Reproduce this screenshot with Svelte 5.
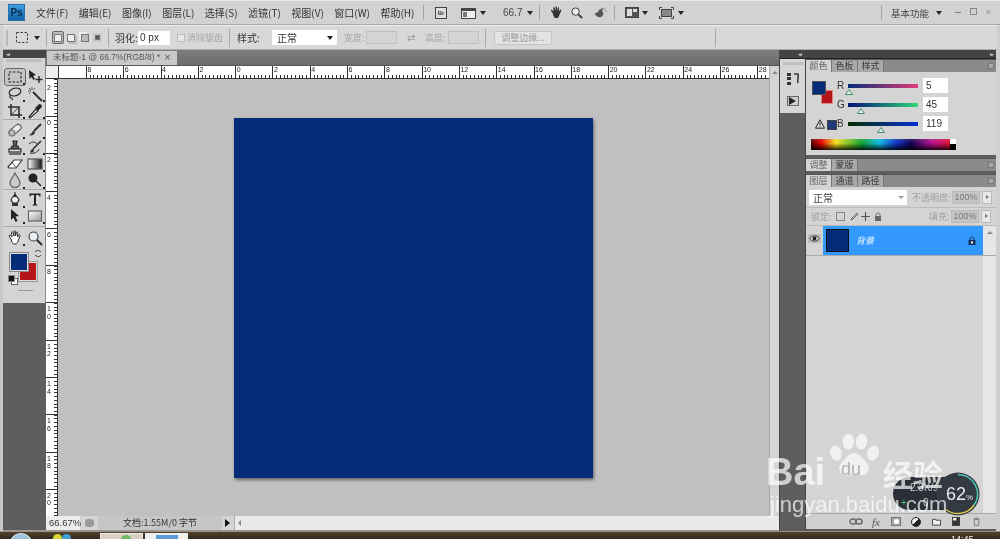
<script>
	const menus = ['文件(F)', '编辑(E)', '图像(I)', '图层(L)', '选择(S)', '滤镜(T)', '视图(V)', '窗口(W)', '帮助(H)'];
	const hLabels = ['8', '6', '4', '2', '0', '2', '4', '6', '8', '10', '12', '14', '16', '18', '20', '22', '24', '26', '28'];
	const vLabels = ['0', '2', '4', '6', '8', '10', '12', '14', '16', '18', '20'];

	const toolGroups = [
		['marquee', 'move', 'lasso', 'wand', 'crop', 'dropper'],
		['heal', 'brush', 'stamp', 'history', 'eraser', 'gradient', 'dodge', 'burn'],
		['pen', 'type', 'select', 'shape'],
		['hand', 'zoom']
	];

	const sliders = [
		{ name: 'R', value: 5, pos: -3, track: 'linear-gradient(90deg, #052d77, #e03a78)' },
		{ name: 'G', value: 45, pos: 9, track: 'linear-gradient(90deg, #051077, #2fd87a)' },
		{ name: 'B', value: 119, pos: 29, track: 'linear-gradient(90deg, #052d00, #0530d8)' }
	];
</script>

{#snippet toolIcon(name)}
	<svg viewBox="0 0 16 16" width="16" height="16" fill="none" stroke="#2a2a2a" stroke-width="1.2">
		{#if name === 'marquee'}
			<rect x="2" y="3" width="12" height="10" stroke-dasharray="2.5 1.5" />
		{:else if name === 'move'}
			<path d="M2 1l7 5-3 1 2 3-1.5 1-2-3-2 2z" fill="#222" stroke="none" />
			<path d="M12 7v7M8.5 10.500h7" stroke-width="1.400" />
		{:else if name === 'lasso'}
			<ellipse cx="8" cy="6" rx="6" ry="3.800" transform="rotate(-15 8 6)" />
			<path d="M4 9c-2 1-1 3 0 3s2 1 1 2" />
		{:else if name === 'wand'}
			<path d="M6 6l9 9" stroke-width="1.800" />
			<path d="M5 1v3M1 5h3M2 2l2 2M8 2L6.500 3.500M2 8l1.500-1.500" stroke-width="1" stroke="#555" />
		{:else if name === 'crop'}
			<path d="M4 1v11h11M1 4h11v11" stroke-width="1.500" />
			<path d="M4 12L12 4" stroke-width="0.800" />
		{:else if name === 'dropper'}
			<path d="M3 15l-1-1 7-8 2 2z" fill="#fff" />
			<path d="M9 5l3-3c1-1 3 1 2 2l-3 3z" fill="#222" />
		{:else if name === 'heal'}
			<rect x="1" y="5" width="14" height="6" rx="3" transform="rotate(-40 8 8)" fill="#eee" stroke="#666" />
			<circle cx="5" cy="11" r="3" fill="#bbb" stroke="#777" />
		{:else if name === 'brush'}
			<path d="M14 2L7 9" stroke-width="1.800" />
			<path d="M7 9c-2 0-2 2-3 3l-2 1c2 1 6 0 6-3z" fill="#333" stroke="none" />
		{:else if name === 'stamp'}
			<path d="M6 2h4l-1 5h2l1 3H4l1-3h2z" fill="#666" stroke="#222" />
			<rect x="2" y="10" width="12" height="3" fill="#ddd" />
			<path d="M2 15h12" />
		{:else if name === 'history'}
			<path d="M14 2L6 10" stroke-width="1.600" />
			<path d="M2 5c3-3 7-2 8 0M3 14c4 1 8-1 9-4" stroke-width="1" />
			<path d="M6 10c-2 0-2 2-3 3 2 1 4 0 4-2z" fill="#333" stroke="none" />
		{:else if name === 'eraser'}
			<path d="M1 11l6-7h8l-6 8H2z" fill="#fff" stroke="#444" />
			<path d="M5 6.500l4 5" stroke-width="0.800" />
		{:else if name === 'gradient'}
			<defs><linearGradient id="tg"><stop offset="0" stop-color="#fff" /><stop offset="1" stop-color="#111" /></linearGradient></defs>
			<rect x="1" y="3" width="14" height="10" fill="url(#tg)" stroke="#555" />
		{:else if name === 'dodge'}
			<path d="M8 1c1 3 5 6 5 10a5 4.500 0 0 1-10 0c0-4 4-7 5-10z" fill="#ccc" stroke="#666" />
		{:else if name === 'burn'}
			<circle cx="6" cy="6" r="4.500" fill="#222" stroke="none" />
			<path d="M8 8l6 6" stroke-width="1.600" />
		{:else if name === 'pen'}
			<path d="M8 1v5M4 9c0-2 3-3 4-6 1 3 4 4 4 6l-2 3H6z" fill="#eee" />
			<rect x="5" y="12" width="6" height="3" fill="#333" stroke="none" />
		{:else if name === 'type'}
			<path d="M2.500 2.500h11v3h-1c0-1-1-1.500-2-1.500H9v9l1.500 1v.5h-5V14L7 13V4H5.500c-1 0-2 .5-2 1.500h-1z" fill="#222" stroke="none" />
		{:else if name === 'select'}
			<path d="M4 1l8 7-3.500.5 2 4.500-2 1-2-4.500L4 12z" fill="#222" stroke="none" />
		{:else if name === 'shape'}
			<defs><linearGradient id="ts" x1="0" y1="0" x2="1" y2="1"><stop offset="0" stop-color="#fff" /><stop offset="1" stop-color="#999" /></linearGradient></defs>
			<rect x="1.500" y="3" width="13" height="10" fill="url(#ts)" stroke="#666" />
		{:else if name === 'hand'}
			<path d="M4 9L2 6c0-1 1-1 1.500-.5L5 7 4.500 2.500c0-1 1.500-1 1.500 0L7 6V1.500c0-1 1.500-1 1.500 0V6l1-3.500c.3-1 1.500-.7 1.300.3L10.500 7l1.500-2c.7-.7 1.500 0 1 1l-2 5c-.5 2-1 3-3 3H7c-1.500 0-2-2-3-5z" fill="#fff" stroke="#333" stroke-width="1" />
		{:else if name === 'zoom'}
			<circle cx="6.500" cy="6.500" r="4.500" fill="#e8eef2" stroke="#444" />
			<path d="M10 10l5 5" stroke-width="2" />
		{/if}
	</svg>
{/snippet}

<div class="app">
	<header class="titlebar">
		<div class="ps-logo">Ps</div>
		<nav class="menus">
			{#each menus as m}
				<span>{m}</span>
			{/each}
		</nav>
		<i class="sep first"></i>
		<div class="br">Br</div>
		<svg class="layout-ic" viewBox="0 0 17 12" width="17" height="12">
			<rect x="0.500" y="1.500" width="14" height="10" fill="#eee" stroke="#444" />
			<rect x="1" y="2" width="13" height="2" fill="#444" />
			<rect x="2" y="5" width="4" height="5" fill="#777" />
		</svg>
		<i class="arrow a1"></i>
		<span class="zoom-val">66.7</span>
		<i class="arrow a2"></i>
		<i class="sep s2"></i>
		<svg class="bar-ic hand-ic" viewBox="0 0 14 14" width="13" height="13">
			<path d="M3 8L1 5c0-1 1-1 1.500-.5L4 6 3.500 2c0-1 1.500-1 1.500 0L6 5V1c0-1 1.500-1 1.500 0V5l1-3c.3-1 1.500-.7 1.300.3L9.500 6l1.500-2c.7-.7 1.500 0 1 1l-2 5c-.5 2-1 3-2.500 3H6c-1.500 0-2-2-3-5z" fill="#333" />
		</svg>
		<svg class="bar-ic zoom-ic" viewBox="0 0 13 13" width="12" height="12" fill="none" stroke="#333">
			<circle cx="5" cy="5" r="4" fill="#eee" />
			<path d="M8 8l4 4" stroke-width="1.800" />
		</svg>
		<svg class="bar-ic rot-ic" viewBox="0 0 14 14" width="14" height="14">
			<path d="M2 9c-1-1 0-2 1-2l2-1 1-2 2-1 1-1 1 1-1 2 1 1c1 2 0 4-2 5-2 1-5-1-6-3z" fill="#555" />
			<path d="M10 2c2 1 3 2 3 4" fill="none" stroke="#888" />
		</svg>
		<i class="sep s3"></i>
		<svg class="bar-ic arr-ic" viewBox="0 0 14 11" width="14" height="11">
			<rect x="0.500" y="0.500" width="13" height="10" fill="#555" stroke="#444" />
			<rect x="2" y="2" width="5" height="7" fill="#ddd" />
			<rect x="8" y="2" width="4" height="3" fill="#ddd" />
		</svg>
		<i class="arrow a3"></i>
		<svg class="bar-ic scr-ic" viewBox="0 0 15 12" width="15" height="12" fill="none" stroke="#444">
			<rect x="2.500" y="2.500" width="10" height="7" fill="#888" />
			<path d="M0.500 3V.5H3M12 .5h2.500V3M.5 9v2.500H3M12 11.500h2.500V9" />
		</svg>
		<i class="arrow a4"></i>
		<i class="sep s4"></i>
		<span class="workspace">基本功能</span>
		<i class="arrow a5"></i>
		<div class="win-btns">
			<i class="min"></i>
			<i class="rest"></i>
			<span class="close">✕</span>
		</div>
	</header>

	<div class="options">
		<i class="grip"></i>
		<svg class="opt-marquee" viewBox="0 0 13 12" width="13" height="12" fill="none" stroke="#444">
			<rect x="0.500" y="0.500" width="11" height="10" stroke-dasharray="2.500 1.500" />
		</svg>
		<i class="arrow o1"></i>
		<i class="osep o2"></i>
		<div class="modes">
			<span class="mode active"><b></b></span>
			<span class="mode"><b class="two"></b></span>
			<span class="mode"><b class="three"></b></span>
			<span class="mode"><b class="four"></b></span>
		</div>
		<i class="osep o3"></i>
		<span class="opt-label feather">羽化:</span>
		<span class="opt-input">0 px</span>
		<i class="check"></i>
		<span class="opt-label dim aa">消除锯齿</span>
		<i class="osep o4"></i>
		<span class="opt-label style-l">样式:</span>
		<span class="opt-select">正常<i class="arrow"></i></span>
		<span class="opt-label dim wl">宽度:</span>
		<i class="dis-input"></i>
		<span class="swap">⇄</span>
		<span class="opt-label dim hl">高度:</span>
		<i class="dis-input"></i>
		<i class="osep o5"></i>
		<span class="refine">调整边缘...</span>
		<i class="osep o6"></i>
	</div>

	<div class="main">
		<aside class="tools-col">
			<div class="tools-head"><span class="dbl">◂◂</span></div>
			<div class="tools">
				<i class="tools-grip"></i>
				{#each toolGroups as group, gi}
					<div class="tool-grid g{gi}">
						{#each group as t}
							<div class="tool" class:on={t === 'marquee'}>
								{@render toolIcon(t)}
								{#if !(t === 'type' || t === 'move' || t === 'zoom')}<i class="corner"></i>{/if}
							</div>
						{/each}
					</div>
					{#if gi < toolGroups.length - 1}<hr class="tool-sep" />{/if}
				{/each}
				<div class="swatches">
					<i class="bg"></i>
					<i class="fg"></i>
					<svg class="swap-ic" viewBox="0 0 9 9" width="9" height="9" fill="none" stroke="#333">
						<path d="M1 3c1-2 4-2 6 0M7 6C6 8 3 8 1 6" />
					</svg>
					<i class="def-bg"></i>
					<i class="def-fg"></i>
				</div>
				<i class="quick"></i>
			</div>
		</aside>

		<section class="doc">
			<div class="tabbar">
				<div class="tab">未标题-1 @ 66.7%(RGB/8) *<span class="tab-x">×</span></div>
			</div>
			<div class="doc-body">
				<div class="doc-inner">
					<div class="ruler-h">
						<div class="corner-box"></div>
						<div class="rh-scale">
							{#each hLabels as l}
								<span>{l}</span>
							{/each}
						</div>
					</div>
					<div class="doc-row">
						<div class="ruler-v">
							<span class="first">2</span>
							{#each vLabels as l}
								<span>{#each l.split('') as c}<em>{c}</em>{/each}</span>
							{/each}
						</div>
						<div class="paste">
							<div class="canvas"></div>
						</div>
					</div>
				</div>
				<div class="vscroll"><i></i></div>
			</div>
			<footer class="status">
				<span class="pct">66.67%</span>
				<span class="st-btn"><i></i></span>
				<span class="st-doc">文档:1.55M/0 字节</span>
				<span class="st-arrow"></span>
				<span class="st-scroll"><i></i></span>
			</footer>
		</section>

		<aside class="dock">
			<div class="dock-head"><span class="dbl">◂◂</span><span class="dbl">▸▸</span></div>
			<div class="dock-body">
				<div class="icon-col">
					<div class="icon-strip">
						<i class="tools-grip"></i>
						<svg viewBox="0 0 14 14" width="14" height="14" fill="none">
							<path d="M1 1h4v3H1zM1 5h4v3H1zM1 10h4v3H1z" fill="#333" />
							<path d="M8 2h4c1 3-1 5 0 9" stroke="#333" stroke-width="1.500" />
						</svg>
						<span class="play"><i></i></span>
					</div>
				</div>
				<div class="panels">
					<div class="panel color-panel">
						<div class="tabs">
							<span class="on">颜色</span><span>色板</span><span>样式</span>
							<i class="pmenu"></i>
						</div>
						<div class="color-body">
							<div class="color-left">
								<i class="c-bg"></i>
								<i class="c-fg"></i>
								<svg class="warn" viewBox="0 0 10 10" width="10" height="10">
									<path d="M5 .8L9.500 9.200H.5z" fill="#ddd" stroke="#222" />
									<path d="M5 3.500v3M5 7.500v1" stroke="#222" />
								</svg>
								<i class="c-small"></i>
							</div>
							<div class="sliders">
								{#each sliders as s}
									<div class="slider-row">
										<span class="s-name">{s.name}</span>
										<div class="track" style="background: {s.track}">
											<svg class="thumb" style="left: {s.pos}px" viewBox="0 0 8 6" width="8" height="6">
												<path d="M4 .6L7.500 5.500H.5z" fill="#e4efe6" stroke="#3f8f68" />
											</svg>
										</div>
										<span class="s-val">{s.value}</span>
									</div>
								{/each}
							</div>
						</div>
						<div class="spectrum"><i></i></div>
					</div>
					<div class="panel adjust-panel">
						<div class="tabs">
							<span class="on">调整</span><span>蒙版</span>
							<i class="pmenu"></i>
						</div>
					</div>
					<div class="panel layers-panel">
						<div class="tabs">
							<span class="on">图层</span><span>通道</span><span>路径</span>
							<i class="pmenu"></i>
						</div>
						<div class="blend-row">
							<span class="blend">正常<i class="blend-arrow"></i></span>
							<span class="dim-l">不透明度:</span>
							<span class="pct-box">100%</span>
							<span class="pct-arrow"></span>
						</div>
						<div class="lock-row">
							<span class="dim-l">锁定:</span>
							<i class="lk l1"></i>
							<svg class="l2" viewBox="0 0 9 9" width="9" height="9"><path d="M1 8l1-2 5-5 1 1-5 5z" fill="none" stroke="#666" /></svg>
							<svg class="l3" viewBox="0 0 9 9" width="9" height="9"><path d="M4.500 0v9M0 4.500h9" stroke="#555" stroke-width="1.200" /></svg>
							<svg class="l4" viewBox="0 0 8 9" width="8" height="9"><path d="M1 4h6v5H1z" fill="#666" /><path d="M2 4V2.500c0-2 4-2 4 0V4" fill="none" stroke="#666" /></svg>
							<span class="dim-l fill">填充:</span>
							<span class="pct-box">100%</span>
							<span class="pct-arrow"></span>
						</div>
						<div class="layer-list">
							<div class="layer">
								<span class="eye">
									<svg viewBox="0 0 12 8" width="11" height="7"><path d="M.5 4C3 0 9 0 11.500 4 9 8 3 8 .5 4z" fill="#ddd" stroke="#222" /><circle cx="6" cy="4" r="2.200" fill="#222" /></svg>
								</span>
								<div class="layer-main">
									<i class="thumb-img"></i>
									<span class="layer-name">背景</span>
									<svg class="layer-lock" viewBox="0 0 8 9" width="8" height="9"><path d="M.5 4h7v5h-7z" fill="#12305a" /><path d="M2 4V2.500c0-2 4-2 4 0V4" fill="none" stroke="#12305a" /><rect x="3" y="5.500" width="2" height="2" fill="#fff" /></svg>
								</div>
								<div class="layer-scroll"><i></i></div>
							</div>
							<div class="list-rest"><i></i></div>
						</div>
						<div class="layer-foot">
							<span class="cell"><svg viewBox="0 0 14 7" width="14" height="7" fill="none" stroke="#666" stroke-width="1.400"><rect x="1" y="1" width="6" height="5" rx="2.500" /><rect x="7" y="1" width="6" height="5" rx="2.500" /></svg></span>
							<span class="cell"><em class="fx">fx</em></span>
							<span class="cell"><span class="mask"><i></i></span></span>
							<span class="cell"><span class="adj"></span></span>
							<span class="cell"><svg viewBox="0 0 10 8" width="9" height="8"><path d="M.5 1h3l1 1h5v5.500h-9z" fill="#eee" stroke="#333" /></svg></span>
							<span class="cell"><svg viewBox="0 0 9 10" width="8" height="9"><rect x=".5" y=".5" width="8" height="9" fill="#eee" stroke="#333" /><path d="M1 9V4h4V1h3v8z" fill="#333" /></svg></span>
							<span class="cell"><svg viewBox="0 0 8 10" width="7" height="9" fill="none" stroke="#777"><path d="M1.500 2.500h5v7h-5zM.5 2h7M3 1h2" /></svg></span>
						</div>
					</div>
				</div>
			</div>
		</aside>
		<div class="right-edge"></div>
	</div>

	<div class="taskbar">
		<i class="orb"></i>
		<i class="dot y"></i>
		<i class="dot b"></i>
		<i class="task t1"><b></b></i>
		<i class="task t2"><b></b></i>
		<span class="clock">14:45</span>
	</div>

	<div class="speed">
		<span class="up">↑</span><span class="rate">2.3K/s</span>
		<span class="down">+</span><span class="rate2">0</span>
		<div class="gauge">
			<svg viewBox="0 0 44 44" width="44" height="44" fill="none">
				<circle cx="22" cy="22" r="21.500" fill="#333a44" />
				<path d="M22 2.500A19.500 19.500 0 0 1 38 33" stroke="#4fc7b4" stroke-width="1.500" />
				<path d="M38 33A19.500 19.500 0 0 1 10 37.500" stroke="#d8c84a" stroke-width="1.500" />
			</svg>
			<span class="gauge-v">62<small>%</small></span>
		</div>
	</div>

	<div class="watermark">
		<svg class="paw" viewBox="0 0 60 54" width="53" height="49">
			<ellipse cx="9" cy="22" rx="6.500" ry="8.500" transform="rotate(-15 9 22)" />
			<ellipse cx="23" cy="9" rx="6.500" ry="9" />
			<ellipse cx="38" cy="9" rx="6.500" ry="9" transform="rotate(8 38 9)" />
			<ellipse cx="51" cy="22" rx="6.500" ry="8.500" transform="rotate(15 51 22)" />
			<path d="M30 22c6 0 8 6 13 10 6 5 3 17-7 15-5-1-8-2-12 0-9 3-15-7-9-14 5-4 8-11 15-11z" />
		</svg>
		<span class="wm-bai">Bai</span>
		<span class="wm-du">du</span>
		<span class="wm-cn">经验</span>
		<span class="wm-url">jingyan.baidu.com</span>
	</div>
</div>

<style>
	:global(body) {
		margin: 0;
		background: #c8c8c8;
	}

	.app {
		position: relative;
		width: 1000px;
		height: 539px;
		display: flex;
		flex-direction: column;
		overflow: hidden;
		background: #cfcfcf;
		font-family: "Noto Sans CJK SC", "Liberation Sans", sans-serif;
		font-size: 10px;
		color: #3a3a3a;
		filter: blur(0.3px);
	}

	i {
		display: block;
		font-style: normal;
	}

	/* title bar */
	.titlebar {
		height: 25px;
		flex: none;
		display: flex;
		align-items: center;
		background: #d2d2d2;
		border-top: 1px solid #e8e8e8;
		box-sizing: border-box;
		border-bottom: 1px solid #a8a8a8;
		position: relative;
	}

	.titlebar > * {
		flex: none;
	}

	.ps-logo {
		width: 17px;
		height: 17px;
		margin-left: 8px;
		background: linear-gradient(180deg, #3ea0e0, #0f5fa8);
		border: 1px solid #2a6ea8;
		box-sizing: border-box;
		color: #0b2a4a;
		font: bold 10px/15px "Liberation Sans", sans-serif;
		text-align: center;
	}

	.menus {
		display: flex;
		gap: 10.500px;
		margin-left: 11px;
		color: #333;
		white-space: nowrap;
		width: 382px;
		font-size: 10px;
	}

	.sep {
		width: 1px;
		height: 15px;
		background: #a4a4a4;
	}

	.sep.first {
		margin-left: 5px;
	}

	.br {
		width: 10px;
		height: 10px;
		margin-left: 11px;
		border: 1px solid #444;
		font: bold 6px/10px "Liberation Sans", sans-serif;
		text-align: center;
		background: #ddd;
	}

	.layout-ic {
		margin-left: 14px;
	}

	.arrow {
		width: 0;
		height: 0;
		border: 3px solid transparent;
		border-top: 4px solid #222;
		border-bottom: 0;
		flex: none;
	}

	.a1 {
		margin-left: 2px;
	}

	.zoom-val {
		margin-left: 17px;
		font: 10px "Liberation Sans", sans-serif;
		color: #444;
		width: 20px;
	}

	.a2 {
		margin-left: 4px;
	}

	.s2 {
		margin-left: 6px;
	}

	.hand-ic {
		margin-left: 10px;
	}

	.zoom-ic {
		margin-left: 8px;
	}

	.rot-ic {
		margin-left: 10px;
	}

	.s3 {
		margin-left: 7px;
	}

	.arr-ic {
		margin-left: 10px;
	}

	.a3 {
		margin-left: 3px;
	}

	.scr-ic {
		margin-left: 11px;
	}

	.a4 {
		margin-left: 4px;
	}

	.s4 {
		margin-left: 197px;
	}

	.workspace {
		margin-left: 9px;
		width: 40px;
		color: #444;
		font-size: 9.500px;
		white-space: nowrap;
	}

	.a5 {
		margin-left: 5px;
	}

	.win-btns {
		display: flex;
		align-items: center;
		margin-left: 13px;
		color: #999;
	}

	.win-btns .min {
		width: 6px;
		height: 1px;
		background: #777;
	}

	.win-btns .rest {
		width: 5px;
		height: 5px;
		margin-left: 9px;
		margin-top: -3px;
		border: 1px solid #888;
	}

	.win-btns .close {
		margin-left: 8px;
		font-size: 8px;
		margin-top: -3px;
	}

	/* options bar */
	.options {
		height: 25px;
		flex: none;
		display: flex;
		align-items: center;
		box-sizing: border-box;
		background: #d8d8d8;
		border-top: 1px solid #eee;
		border-bottom: 1px solid #aaa;
		margin-left: 3px;
		margin-right: 3px;
		white-space: nowrap;
	}

	.options > * {
		flex: none;
	}

	.grip {
		width: 2px;
		height: 16px;
		margin-left: 3px;
		background: #b8b8b8;
	}

	.opt-marquee {
		margin-left: 8px;
	}

	.o1 {
		margin-left: 5px;
	}

	.osep {
		width: 1px;
		height: 18px;
		background: #ababab;
		flex: none;
	}

	.o2 {
		margin-left: 6px;
	}

	.modes {
		display: flex;
		align-items: center;
		gap: 1px;
		margin-left: 5px;
		width: 52px;
	}

	.mode {
		width: 13px;
		height: 13px;
		display: flex;
		align-items: center;
		justify-content: center;
	}

	.mode.active {
		box-sizing: border-box;
		border: 1px solid #666;
		border-radius: 2px;
		background: #bbb;
	}

	.mode b {
		width: 8px;
		height: 8px;
		background: #eee;
		border: 1px solid #777;
		display: block;
		box-sizing: border-box;
	}

	.mode b.two {
		box-shadow: 2px 2px 0 #bbb;
	}

	.mode b.three {
		background: #bbb;
		box-shadow: -2px -2px 0 #eee;
	}

	.mode b.four {
		background: #555;
		box-shadow: 0 0 0 2px #c8c8c8;
		width: 5px;
		height: 5px;
	}

	.o3 {
		margin-left: 4px;
	}

	.opt-label {
		color: #333;
		font-size: 10px;
	}

	.dim {
		color: #a8a8a8;
	}

	.feather {
		margin-left: 6px;
		width: 23px;
	}

	.opt-input {
		width: 32px;
		height: 14px;
		background: #fff;
		font: 10px/14px "Liberation Sans", sans-serif;
		padding-left: 2px;
		box-sizing: border-box;
		color: #333;
	}

	.check {
		width: 6px;
		height: 6px;
		margin-left: 7px;
		border: 1px solid #bbb;
		background: #e6e6e6;
	}

	.aa {
		margin-left: 2px;
		font-size: 9px;
		width: 35px;
	}

	.o4 {
		margin-left: 7px;
	}

	.style-l {
		margin-left: 7px;
		width: 35px;
	}

	.opt-select {
		width: 65px;
		height: 15px;
		background: #fff;
		line-height: 15px;
		padding-left: 5px;
		box-sizing: border-box;
		color: #333;
		position: relative;
		display: flex;
		align-items: center;
		justify-content: space-between;
		padding-right: 4px;
	}

	.wl {
		margin-left: 7px;
		width: 22px;
		font-size: 9px;
	}

	.dis-input {
		width: 31px;
		height: 13px;
		border: 1px solid #c0c0c0;
		background: #d4d4d4;
		box-sizing: border-box;
	}

	.swap {
		margin-left: 10px;
		width: 16px;
		color: #999;
		font: 10px "DejaVu Sans", sans-serif;
	}

	.hl {
		margin-left: 2px;
		width: 23px;
		font-size: 9px;
	}

	.o5 {
		margin-left: 6px;
	}

	.refine {
		margin-left: 8px;
		width: 58px;
		height: 14px;
		background: #e4e4e4;
		border: 1px solid #c4c4c4;
		border-radius: 2px;
		box-sizing: border-box;
		color: #999;
		font-size: 9px;
		line-height: 12px;
		text-align: center;
	}

	.o6 {
		margin-left: 163px;
	}

	/* main */
	.main {
		flex: 1;
		display: flex;
		min-height: 0;
		background: #c8c8c8;
	}

	.tools-col {
		width: 43px;
		margin-left: 3px;
		flex: none;
		background: #5e5e5e;
		display: flex;
		flex-direction: column;
		border-bottom: 1px solid #999;
	}

	.tools-head {
		height: 8px;
		background: #454545;
		color: #ccc;
		font-size: 5px;
		line-height: 8px;
		padding-left: 3px;
	}

	.dbl {
		font: 5px/8px "DejaVu Sans", sans-serif;
		letter-spacing: -1px;
		color: #ccc;
	}

	.tools {
		height: 245px;
		background: #d4d4d4;
		padding-top: 1px;
		box-sizing: border-box;
		border-right: 1px solid #888;
		position: relative;
	}

	.tools-grip {
		height: 3px;
		margin: 0 3px 0;
		background: #c0c0c0;
	}

	.tool-grid {
		display: grid;
		grid-template-columns: 20px 20px;
		grid-auto-rows: 16.700px;
		padding: 2px 0 0 2px;
	}

	.tool-grid.g0 {
		padding-top: 7px;
	}

	.tool-grid.g2 {
		padding-top: 1px;
		padding-bottom: 2px;
	}

	.tool {
		position: relative;
		display: flex;
		align-items: center;
		justify-content: center;
	}

	.tool.on {
		outline: 1px solid #666;
		background: #c4c4c4;
		border-radius: 2px;
		margin: 0 0 1px 0;
	}

	.corner {
		position: absolute;
		right: 0;
		bottom: 0;
		width: 2px;
		height: 2px;
		background: #222;
	}

	.tool-sep {
		margin: 0;
		border: 0;
		height: 1px;
		background: #aaa;
	}

	.swatches {
		position: relative;
		height: 34px;
		margin: 7px 0 0 7px;
	}

	.swatches .fg,
	.swatches .bg {
		position: absolute;
		width: 16px;
		height: 16px;
		border: 1px solid #ddd;
	}

	.swatches .fg {
		left: 0;
		top: 0;
		background: #052d77;
		outline: 1px solid #888;
	}

	.swatches .bg {
		left: 9px;
		top: 9px;
		height: 17px;
		background: #b5141a;
		outline: 1px solid #999;
	}

	.swap-ic {
		position: absolute;
		left: 24px;
		top: -4px;
	}

	.def-fg,
	.def-bg {
		position: absolute;
		width: 5px;
		height: 5px;
	}

	.def-bg {
		left: 1px;
		top: 25px;
		background: #fff;
		border: 1px solid #666;
	}

	.def-fg {
		left: -2px;
		top: 22px;
		background: #111;
		border: 1px solid #888;
	}

	.quick {
		height: 1px;
		background: #999;
		margin: 3px 12px 0 15px;
	}

	/* document */
	.doc {
		width: 733px;
		flex: none;
		display: flex;
		flex-direction: column;
		background: #c0c0c0;
	}

	.tabbar {
		height: 15px;
		flex: none;
		background: linear-gradient(180deg, #7d7d7d, #6c6c6c);
		display: flex;
		align-items: flex-end;
	}

	.tab {
		width: 130px;
		height: 14px;
		margin-left: 1px;
		background: #c8c8c8;
		color: #555;
		font-size: 8.500px;
		line-height: 13px;
		padding-left: 6px;
		box-sizing: border-box;
		white-space: nowrap;
		display: flex;
		gap: 4px;
		font-family: "Liberation Sans", "Noto Sans CJK SC", sans-serif;
	}

	.tab-x {
		font-size: 11px;
		line-height: 12px;
	}

	.doc-body {
		flex: 1;
		display: flex;
		min-height: 0;
		border-top: 1px solid #555;
	}

	.doc-inner {
		flex: 1;
		display: flex;
		flex-direction: column;
		min-width: 0;
	}

	.ruler-h {
		height: 13px;
		flex: none;
		display: flex;
		background: #fff;
		border-bottom: 1px solid #333;
		box-sizing: border-box;
	}

	.corner-box {
		width: 12px;
		flex: none;
		border-right: 1px solid #333;
		background: #eee;
	}

	.rh-scale {
		flex: 1;
		display: flex;
		padding-left: 27px;
		overflow: hidden;
		background: repeating-linear-gradient(90deg, #333 0 1px, transparent 1px 3.730px) 27px 100% / 100% 3px no-repeat;
	}

	.rh-scale span {
		width: 37.300px;
		flex: none;
		box-sizing: border-box;
		border-left: 1px solid #333;
		padding-left: 0.500px;
		font: 7px/8px "Liberation Sans", sans-serif;
		color: #222;
	}

	.doc-row {
		flex: 1;
		display: flex;
		min-height: 0;
	}

	.ruler-v {
		width: 12px;
		flex: none;
		background:
			repeating-linear-gradient(180deg, #333 0 1px, transparent 1px 3.730px) 100% 0 / 3px 100% no-repeat,
			#fff;
		border-right: 1px solid #333;
		overflow: hidden;
		display: flex;
		flex-direction: column;
		padding-top: 2px;
		box-sizing: border-box;
	}

	.ruler-v span {
		height: 37.300px;
		flex: none;
		box-sizing: border-box;
		font: 7px/7.500px "Liberation Sans", sans-serif;
		color: #222;
		padding: 2px 0 0 1px;
		border-top: 1px solid #333;
		width: 11px;
	}

	.ruler-v span.first {
		height: 35px;
		border-top: 0;
		padding-top: 3px;
	}

	.ruler-v em {
		display: block;
		font-style: normal;
	}

	.paste {
		flex: 1;
		display: flex;
		align-items: center;
		justify-content: center;
		background: #c0c0c0;
	}

	.canvas {
		width: 359px;
		height: 360px;
		background: #052d77;
		box-shadow: 1px 2px 3px rgba(0, 0, 0, 0.45);
	}

	.vscroll {
		width: 10px;
		flex: none;
		background: #d4d4d4;
		border-left: 1px solid #aaa;
		box-sizing: border-box;
	}

	.vscroll i {
		width: 0;
		height: 0;
		margin: 5px auto 0;
		border: 3px solid transparent;
		border-bottom: 3px solid #888;
		border-top: 0;
	}

	.status {
		height: 14px;
		flex: none;
		display: flex;
		align-items: center;
		background: #d4d4d4;
		border-bottom: 1px solid #999;
	}

	.pct {
		width: 34px;
		height: 14px;
		background: #eee;
		font: 9.500px/14px "Liberation Sans", sans-serif;
		padding-left: 3px;
		box-sizing: border-box;
		color: #333;
	}

	.st-btn {
		width: 18px;
		display: flex;
		justify-content: center;
	}

	.st-btn i {
		width: 9px;
		height: 8px;
		background: #999;
		border-radius: 3px;
	}

	.st-doc {
		width: 124px;
		height: 14px;
		background: #c6c6c6;
		color: #333;
		text-align: center;
		line-height: 14px;
		font-size: 9px;
		white-space: nowrap;
	}

	.st-arrow {
		width: 0;
		height: 0;
		margin: 0 4px 0 3px;
		border: 4px solid transparent;
		border-left: 5px solid #111;
		border-right: 0;
	}

	.st-scroll {
		flex: 1;
		height: 14px;
		background: #eaeaea;
		border-left: 1px solid #aaa;
		display: flex;
		align-items: center;
	}

	.st-scroll i {
		width: 0;
		height: 0;
		margin-left: 3px;
		border: 3px solid transparent;
		border-right: 3px solid #888;
		border-left: 0;
	}

	/* dock */
	.dock {
		width: 217px;
		flex: none;
		display: flex;
		flex-direction: column;
		background: #5e5e5e;
		border-left: 1px solid #444;
		box-sizing: border-box;
	}

	.dock-head {
		height: 8px;
		flex: none;
		background: #444;
		display: flex;
		justify-content: space-between;
		padding: 0 3px 0 18px;
		border-bottom: 1px solid #222;
	}

	.dock-body {
		flex: 1;
		display: flex;
		min-height: 0;
	}

	.icon-col {
		width: 25px;
		flex: none;
		border-right: 1px solid #444;
	}

	.icon-strip {
		height: 54px;
		background: #d6d6d6;
		display: flex;
		flex-direction: column;
		align-items: center;
		gap: 7px;
		padding-top: 3px;
		box-sizing: border-box;
	}

	.icon-strip .tools-grip {
		width: 20px;
		margin: 0;
	}

	.play {
		width: 10px;
		height: 8px;
		margin-top: 3px;
		border: 1px solid #666;
		background: #cfcfcf;
		display: flex;
		align-items: center;
		justify-content: center;
	}

	.play i {
		width: 0;
		height: 0;
		border: 4px solid transparent;
		border-left: 7px solid #222;
		border-right: 0;
	}

	.panels {
		flex: 1;
		display: flex;
		flex-direction: column;
		min-width: 0;
		gap: 3px;
	}

	.panel {
		background: #d4d4d4;
	}

	.tabs {
		height: 13px;
		display: flex;
		background: #8a8a8a;
		position: relative;
		box-sizing: border-box;
		border-top: 1px solid #555;
	}

	.tabs span {
		width: 26px;
		text-align: center;
		color: #3a3a3a;
		font-size: 9px;
		line-height: 12px;
		background: #a8a8a8;
		border-right: 1px solid #777;
		box-sizing: border-box;
	}

	.tabs span.on {
		background: #d4d4d4;
		color: #666;
	}

	.pmenu {
		position: absolute;
		right: 2px;
		top: 3px;
		width: 6px;
		height: 6px;
		background: #aaa;
		border: 1px solid #777;
		box-sizing: border-box;
	}

	.color-panel {
		height: 96px;
	}

	.color-body {
		display: flex;
		height: 67px;
		position: relative;
	}

	.color-left {
		width: 31px;
		position: relative;
		flex: none;
	}

	.c-fg,
	.c-bg {
		position: absolute;
		box-sizing: border-box;
	}

	.c-fg {
		left: 6px;
		top: 9px;
		width: 14px;
		height: 14px;
		background: #052d77;
		border: 1px solid #555;
	}

	.c-bg {
		left: 15px;
		top: 18px;
		width: 12px;
		height: 14px;
		background: #b5141a;
		border: 1px solid #d88;
	}

	.warn {
		position: absolute;
		left: 9px;
		top: 47px;
	}

	.c-small {
		position: absolute;
		left: 21px;
		top: 48px;
		width: 8px;
		height: 8px;
		background: #1c3a78;
		border: 1px solid #444;
	}

	.sliders {
		display: flex;
		flex-direction: column;
		gap: 4px;
		padding-top: 6px;
		width: 150px;
	}

	.slider-row {
		display: flex;
		align-items: center;
		height: 15px;
	}

	.s-name {
		width: 10px;
		font: 10px "Liberation Sans", sans-serif;
		color: #333;
		margin-right: 1px;
	}

	.track {
		width: 70px;
		height: 4px;
		position: relative;
	}

	.thumb {
		position: absolute;
		top: 5px;
	}

	.s-val {
		width: 25px;
		height: 15px;
		margin-left: 5px;
		background: #fff;
		font: 10px/15px "Liberation Sans", sans-serif;
		padding-left: 3px;
		box-sizing: border-box;
		color: #333;
	}

	.spectrum {
		height: 11px;
		width: 145px;
		margin-left: 5px;
		position: relative;
		background:
			linear-gradient(180deg, rgba(255, 255, 255, 0.12), transparent 40%, rgba(0, 0, 0, 0.85)),
			linear-gradient(90deg, #500000, #e00000 7%, #f0e020 17%, #10a030 35%, #10b8e0 47%, #1030c0 59%, #100050 69%, #b01090 83%, #e01030 96%, #e00000);
	}

	.spectrum i {
		position: absolute;
		right: 0;
		top: 0;
		width: 6px;
		height: 11px;
		background: linear-gradient(180deg, #fff 50%, #000 50%);
	}

	.adjust-panel {
		height: 13px;
	}

	.layers-panel {
		flex: 1;
		display: flex;
		flex-direction: column;
		min-height: 0;
		margin-bottom: 2px;
	}

	.blend-row,
	.lock-row {
		display: flex;
		align-items: center;
		flex: none;
		color: #999;
		border-bottom: 1px solid #bbb;
		box-sizing: border-box;
		padding-left: 3px;
		white-space: nowrap;
	}

	.blend-row > *,
	.lock-row > * {
		flex: none;
	}

	.blend-row {
		height: 21px;
	}

	.lock-row {
		height: 18px;
	}

	.blend {
		width: 98px;
		height: 15px;
		background: #fff;
		padding-left: 4px;
		box-sizing: border-box;
		line-height: 15px;
		color: #444;
		position: relative;
	}

	.blend-arrow {
		position: absolute;
		right: 3px;
		top: 6px;
		border: 3px solid transparent;
		border-top: 3px solid #999;
		border-bottom: 0;
	}

	.dim-l {
		color: #a0a0a0;
		font-size: 9px;
		margin-left: 5px;
		width: 40px;
	}

	.lock-row .dim-l {
		width: 23px;
		margin-left: 2px;
	}

	.lock-row .dim-l.fill {
		margin-left: 47px;
		width: 22px;
	}

	.pct-box {
		width: 28px;
		height: 13px;
		background: #c4c4c4;
		border: 1px solid #bbb;
		box-sizing: border-box;
		font: 9px/11px "Liberation Sans", sans-serif;
		color: #777;
		text-align: center;
	}

	.pct-arrow {
		width: 10px;
		height: 13px;
		margin-left: 2px;
		background: #e8e8e8;
		border: 1px solid #bbb;
		box-sizing: border-box;
		position: relative;
	}

	.pct-arrow::after {
		content: '';
		position: absolute;
		left: 3px;
		top: 3px;
		border: 2.500px solid transparent;
		border-left: 3px solid #777;
		border-right: 0;
	}

	.lk {
		width: 7px;
		height: 7px;
		border: 1px solid #888;
		margin-left: 2px;
	}

	.l2 {
		margin-left: 5px;
	}

	.l3 {
		margin-left: 2px;
	}

	.l4 {
		margin-left: 4px;
	}

	.layer-list {
		flex: 1;
		display: flex;
		flex-direction: column;
		min-height: 0;
	}

	.layer {
		height: 30px;
		flex: none;
		display: flex;
		border-bottom: 1px solid #aaa;
		box-sizing: border-box;
	}

	.eye {
		width: 17px;
		display: flex;
		justify-content: center;
		padding-top: 8px;
		box-sizing: border-box;
		flex: none;
	}

	.eye svg {
		background: #bbb;
		padding: 1px;
		box-sizing: content-box;
		height: 7px;
	}

	.layer-main {
		flex: 1;
		background: #3399ff;
		display: flex;
		align-items: center;
		padding-left: 3px;
	}

	.thumb-img {
		width: 23px;
		height: 23px;
		background: #052d77;
		border: 1px solid #111;
		box-sizing: border-box;
	}

	.layer-name {
		margin-left: 7px;
		color: #eaf4ff;
		font-style: italic;
		font-size: 9px;
		width: 112px;
	}

	.layer-scroll {
		width: 13px;
		flex: none;
		background: #e6e6e6;
	}

	.layer-scroll i {
		width: 0;
		height: 0;
		margin: 5px auto 0;
		border: 3px solid transparent;
		border-bottom: 3px solid #888;
		border-top: 0;
	}

	.list-rest {
		flex: 1;
		position: relative;
		background: linear-gradient(90deg, #d4d4d4 177px, #e6e6e6 177px);
	}

	.layer-foot {
		height: 15px;
		flex: none;
		display: flex;
		align-items: center;
		justify-content: flex-end;
		padding-right: 10px;
		background: #d0d0d0;
		border-top: 1px solid #aaa;
		color: #555;
	}

	.cell {
		width: 20px;
		display: flex;
		justify-content: center;
		align-items: center;
	}

	.fx {
		font: italic 11px "Liberation Serif", serif;
		color: #555;
	}

	.mask {
		width: 10px;
		height: 9px;
		background: #aaa;
		border: 1px solid #777;
		box-sizing: border-box;
		display: flex;
		align-items: center;
		justify-content: center;
	}

	.mask i {
		width: 5px;
		height: 5px;
		border-radius: 50%;
		background: #fff;
	}

	.adj {
		width: 8px;
		height: 8px;
		border-radius: 50%;
		background: linear-gradient(135deg, #eee 50%, #222 50%);
		border: 1px solid #222;
	}

	.right-edge {
		flex: 1;
		background: #cfcfcf;
	}

	/* taskbar */
	.taskbar {
		height: 8px;
		flex: none;
		position: relative;
		background: linear-gradient(180deg, #53422f, #32281d);
		overflow: hidden;
		border-top: 1px solid #9a8f80;
		box-sizing: border-box;
	}

	.orb {
		position: absolute;
		left: 9px;
		top: 1px;
		width: 22px;
		height: 22px;
		border-radius: 50%;
		background: #9fc4dd;
		border: 1px solid #dfe8ee;
	}

	.dot {
		position: absolute;
		top: 2px;
		width: 9px;
		height: 9px;
		border-radius: 50%;
	}

	.dot.y {
		left: 53px;
		background: #d8d830;
	}

	.dot.b {
		left: 62px;
		background: #40a0d8;
	}

	.task {
		position: absolute;
		top: 1px;
		height: 8px;
		background: #d8d0c0;
		border: 1px solid #eee;
		box-sizing: border-box;
	}

	.task.t1 {
		left: 100px;
		width: 43px;
	}

	.task.t2 {
		left: 145px;
		width: 43px;
		background: #f0f0f0;
	}

	.task b {
		position: absolute;
		display: block;
		top: 1px;
		height: 8px;
	}

	.task.t1 b {
		left: 20px;
		width: 10px;
		border-radius: 50%;
		background: #6fb860;
	}

	.task.t2 b {
		left: 10px;
		width: 22px;
		background: #5a9bd8;
	}

	.clock {
		position: absolute;
		left: 951px;
		top: 2px;
		color: #f2f2f2;
		font: 9px "Liberation Sans", sans-serif;
	}

	/* overlays */
	.speed {
		position: absolute;
		left: 893px;
		top: 477px;
		width: 65px;
		height: 33px;
		border-radius: 17px 0 0 17px;
		background: #2b3038;
		color: #ccc;
		font: 10px "Liberation Sans", sans-serif;
	}

	.speed .up {
		position: absolute;
		left: 9px;
		top: 6px;
		color: #4aa3d8;
		font-size: 7px;
	}

	.speed .rate {
		position: absolute;
		left: 17px;
		top: 5px;
	}

	.speed .down {
		position: absolute;
		left: 8px;
		top: 20px;
		color: #3fbf6f;
	}

	.speed .rate2 {
		position: absolute;
		left: 30px;
		top: 20px;
	}

	.gauge {
		position: absolute;
		left: 43px;
		top: -5px;
		width: 44px;
		height: 44px;
	}

	.gauge-v {
		position: absolute;
		left: 10px;
		top: 11px;
		font: 18px/22px "Liberation Sans", sans-serif;
		color: #e8e8e8;
		white-space: nowrap;
	}

	.gauge-v small {
		font-size: 8px;
	}

	.watermark {
		position: absolute;
		left: 765px;
		top: 430px;
		width: 190px;
		height: 90px;
		color: rgba(255, 255, 255, 0.7);
		pointer-events: none;
	}

	.paw {
		position: absolute;
		left: 63px;
		top: 3px;
		fill: rgba(255, 255, 255, 0.68);
	}

	.wm-bai,
	.wm-du,
	.wm-url {
		position: absolute;
		font-family: "Liberation Sans", sans-serif;
		white-space: nowrap;
	}

	.wm-bai {
		left: 1px;
		top: 23px;
		font-size: 38px;
		line-height: 38px;
		font-weight: bold;
	}

	.wm-du {
		left: 76px;
		top: 29px;
		font-size: 18px;
		line-height: 20px;
		color: rgba(150, 150, 150, 0.7);
	}

	.wm-cn {
		position: absolute;
		left: 118px;
		top: 26px;
		font: bold 30px/34px "Noto Sans CJK SC", sans-serif;
	}

	.wm-url {
		left: 5px;
		top: 62px;
		font-size: 22px;
		line-height: 26px;
	}
</style>
